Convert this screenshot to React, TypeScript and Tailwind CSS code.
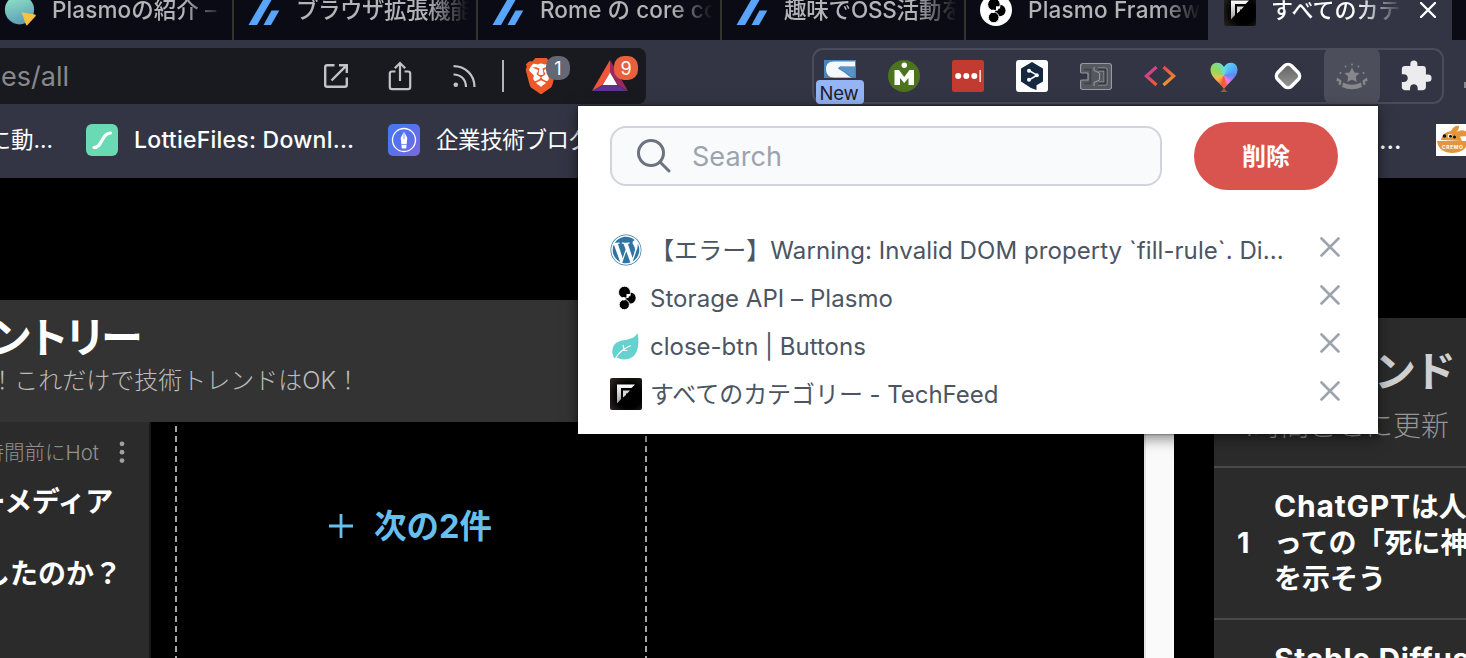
import type { ReactNode } from "react";
import { SiBrave } from "react-icons/si";
import { FaWordpress } from "react-icons/fa";
import { MdExtension } from "react-icons/md";

const ZennIcon = () => (
  <svg viewBox="0 0 32 32" className="size-8 shrink-0" fill="#59a5fb">
    <path d="M0.5 31H9L27 0H18.5Z" />
    <path d="M15.5 31H23L31.3 16.5H23.5Z" />
  </svg>
);

const TechFeedIcon = () => (
  <svg viewBox="0 0 32 32" className="size-8 shrink-0">
    <defs>
      <radialGradient id="tf" cx="0.6" cy="0.55" r="0.75">
        <stop offset="0.5" stopColor="#000" />
        <stop offset="1" stopColor="#2b2624" />
      </radialGradient>
      <linearGradient id="tfl" x1="0" y1="0" x2="0" y2="1">
        <stop offset="0" stopColor="#fff" />
        <stop offset="1" stopColor="#9a9a9a" />
      </linearGradient>
    </defs>
    <rect width="32" height="32" rx="2" fill="url(#tf)" />
    <path d="M7 6.500H25L21.500 10H11V21L7 25.500Z" fill="url(#tfl)" />
    <path d="M13 12.500H20L17.200 15.500H16V17L13 19.500Z" fill="#d8d8d8" />
  </svg>
);

const PlasmoMark = ({ className }: { className: string }) => (
  <svg viewBox="0 0 18 24" className={className}>
    <circle cx="12.200" cy="12" r="5.500" fill="#000" />
    <circle cx="6.500" cy="6.200" r="6" fill="#000" stroke="#fff" strokeWidth="0.900" />
    <circle cx="6.300" cy="18.600" r="5.100" fill="#000" stroke="#fff" strokeWidth="0.900" />
    <path d="M8.500 8H12.500V10.200H10.500V12H8.500Z" fill="#fff" />
    <circle cx="5.800" cy="12.800" r="1.700" fill="#fff" />
  </svg>
);

const PlanetIcon = () => (
  <svg viewBox="0 0 32 32" className="size-8 shrink-0">
    <defs>
      <linearGradient id="pl" x1="0.3" y1="0" x2="0.6" y2="1">
        <stop offset="0" stopColor="#8fe3c4" />
        <stop offset="1" stopColor="#5b9cb8" />
      </linearGradient>
    </defs>
    <circle cx="15.5" cy="15.8" r="14.6" fill="url(#pl)" />
    <path d="M18.2 18.2L31 20.5Q32.300 21 31.500 22.200L23.500 31Q22.500 32 21.900 30.500L17.800 19Q17.600 18.200 18.200 18.200Z" fill="#f6c244" />
  </svg>
);

const tabs = [
  { icon: <PlanetIcon />, title: "Plasmoの紹介 –", spacing: "tracking-[0.1px]" },
  { icon: <ZennIcon />, title: "ブラウザ拡張機能", spacing: "tracking-[-0.5px]" },
  { icon: <ZennIcon />, title: "Rome の core co", spacing: "tracking-[0.1px]" },
  { icon: <ZennIcon />, title: "趣味でOSS活動を", spacing: "tracking-[-0.2px]" },
  {
    icon: (
      <span className="flex size-8 shrink-0 items-center justify-center rounded-full bg-white">
        <PlasmoMark className="h-[25px] w-[19px]" />
      </span>
    ),
    title: "Plasmo Framework",
    spacing: "tracking-[0.2px]",
  },
];

const TabStrip = () => (
  <div className="flex h-10 shrink-0 overflow-hidden bg-[#0b0b15]">
    {tabs.map((t, i) => (
      <div
        key={i}
        className={`flex h-10 shrink-0 overflow-hidden ${i === 0 ? "w-[234px] pl-1" : i === 4 ? "w-[242px] pl-[14px]" : "w-[244px] pl-[14px]"} ${i < 4 ? "border-r-2 border-[#33342f]" : ""}`}
      >
        <div className="-mt-5 flex h-[60px] items-center">
          {t.icon}
          <span className={`ml-4 w-[173px] overflow-hidden whitespace-nowrap text-[22.5px] font-[450] leading-[36px] text-[#b4b4b7] [mask-image:linear-gradient(to_right,black_76%,transparent)] ${t.spacing}`}>
            {t.title}
          </span>
        </div>
      </div>
    ))}
    <div className="flex h-10 w-[244px] shrink-0 overflow-hidden bg-[#333544] pl-4">
      <div className="-mt-5 flex h-[60px] items-center">
        <TechFeedIcon />
        <span className="ml-[15px] w-[132px] overflow-hidden whitespace-nowrap text-[22px] font-medium leading-[36px] text-white [mask-image:linear-gradient(to_right,black_65%,transparent)]">
          すべてのカテゴ
        </span>
        <svg viewBox="0 0 16 16" className="ml-[17px] size-4" stroke="#fff" strokeWidth="2.4" strokeLinecap="round">
          <path d="M1 1L15 15M15 1L1 15" />
        </svg>
      </div>
    </div>
  </div>
);

const DeepLIcon = () => (
  <svg viewBox="0 0 32 32" className="size-8">
    <rect width="32" height="32" rx="3" fill="#fff" />
    <path d="M16 2L27 8.500V21.500L20.500 25.300V30L15 28L5 21.500V8.500Z" fill="#152840" />
    <path d="M13 10.500L21 15.200L13 20" stroke="#fff" strokeWidth="1.500" fill="none" />
    <g fill="#fff">
      <circle cx="13" cy="10.700" r="2" />
      <circle cx="20.800" cy="15.200" r="2" />
      <circle cx="13" cy="19.800" r="2" />
    </g>
  </svg>
);

const extensions: ReactNode[] = [
  <div className="relative flex h-full w-full items-center justify-center">
    <svg viewBox="0 0 32 32" className="size-8">
      <rect width="32" height="18" fill="#4a84b9" />
      <path d="M31 1.500H10C4 1.500 2 5 2 9C2 14 5 17.500 10 17.500H29C26 17.500 24 15.500 21 13L14 8.500L16 6.500H31Z" fill="#f4f8fb" />
      <path d="M14 8.200L16 6.500L30.500 7V16.500H28L22 12.500Z" fill="#5b93c4" />
    </svg>
    <span className="absolute bottom-0 left-1 flex h-6 w-12 items-center justify-center rounded-[4px] bg-[#94b4f6] pr-0.5 pt-0.5 text-[18.5px] leading-none tracking-[-0.2px] text-[#1f2023]">
      New
    </span>
  </div>,
  <svg viewBox="0 0 32 32" className="size-8">
    <circle cx="16" cy="16" r="16" fill="#4c7320" />
    <circle cx="16.300" cy="5.200" r="2.700" fill="#fff" />
    <path d="M6.500 25V10H11L16.200 17L21.500 10H26V25H20.500V18L16.200 23L12 18V25Z" fill="#fff" />
  </svg>,
  <svg viewBox="0 0 32 32" className="size-8">
    <rect width="32" height="32" rx="2.500" fill="#c13b31" />
    <g fill="#fff">
      <circle cx="6.200" cy="16" r="3" />
      <circle cx="14.300" cy="16" r="3" />
      <circle cx="22.300" cy="16" r="3" />
      <rect x="27.500" y="10" width="1.300" height="12" />
    </g>
  </svg>,
  <DeepLIcon />,
  <svg viewBox="0 0 32 32" className="size-8" strokeLinejoin="round">
    <path d="M3 3.500H29Q31.500 3.500 31.500 6V27Q31.500 29.500 29 29.500H3Q0.500 29.500 0.500 27V21.500Q0.500 20 2 20H8V13H2Q0.500 13 0.500 11.500V6Q0.500 3.500 3 3.500Z" fill="#55585e" stroke="#979a9e" strokeWidth="1.200" />
    <path d="M14 7V10.500L19.500 13V20L14 22.500V26" fill="none" stroke="#9a9da1" strokeWidth="1" />
    <path d="M18 9.500H25.500V23.500H18" fill="none" stroke="#9a9da1" strokeWidth="4" />
    <path d="M18 9.500H25.500V23.500H18" fill="none" stroke="#383a47" strokeWidth="2.400" />
    <path d="M4 9.500H10.500V23.500H4" fill="none" stroke="#3f414b" strokeWidth="1.600" />
  </svg>,
  <svg viewBox="0 0 32 32" className="size-8" fill="none" strokeWidth="3.200">
    <defs>
      <linearGradient id="c1" x1="0" y1="0" x2="0.600" y2="1">
        <stop offset="0.300" stopColor="#c9418f" />
        <stop offset="1" stopColor="#f0583a" />
      </linearGradient>
      <linearGradient id="c2" x1="0.300" y1="0" x2="0.500" y2="1">
        <stop offset="0" stopColor="#ea4a4a" />
        <stop offset="1" stopColor="#e9a02c" />
      </linearGradient>
    </defs>
    <path d="M12.500 7L2.300 16L12.500 25" stroke="url(#c1)" />
    <path d="M19.500 7L29.700 16L19.500 25" stroke="url(#c2)" />
  </svg>,
  <div className="relative h-8 w-8">
    <div className="absolute inset-0 bg-[conic-gradient(from_0deg_at_50%_48%,#62e0ea,#58b8f8_12%,#5a8cf5_24%,#b07af0_34%,#f77fe0_42%,#f0603e_48%,#ef5a3e_53%,#f5a04a_62%,#efc04e_70%,#9fd45a_80%,#86d978_90%,#62e0ea)] [clip-path:path('M16_29C11_22_2.500_17_2.500_10C2.500_1_13_1_16_7C19_1_29.500_1_29.500_10C29.500_17_21_22_16_29Z')]" />
    <svg viewBox="0 0 32 32" className="absolute inset-0 size-8">
      <path d="M16 28.500L19.500 32H12.500Z" fill="#b4503f" />
    </svg>
  </div>,
  <svg viewBox="0 0 32 32" className="size-8">
    <defs>
      <linearGradient id="dm" x1="0" y1="0" x2="1" y2="1">
        <stop offset="0" stopColor="#5e5e5e" />
        <stop offset="1" stopColor="#9a9a9a" />
      </linearGradient>
    </defs>
    <rect x="6.300" y="6.300" width="19.400" height="19.400" rx="5" transform="rotate(45 16 16)" fill="url(#dm)" stroke="#fff" strokeWidth="3.400" />
  </svg>,
  <svg viewBox="0 0 32 32" className="size-8" fill="#87888b">
    <path d="M16 7.500L18.400 12.400L23.500 13.100L19.800 16.700L20.700 22L16 19.500L11.300 22L12.200 16.700L8.500 13.100L13.600 12.400Z" />
    <path d="M7 22.500Q16 27 25 22.500L26 27Q16 31.500 6 27Z" />
    <path d="M1 17.500L5.500 20.500L4.800 25L2.500 24.500L3 21.500L0.500 21Z" />
    <path d="M31 17.500L26.500 20.500L27.200 25L29.500 24.500L29 21.500L31.500 21Z" />
    <circle cx="16" cy="4.500" r="1" />
    <circle cx="9.500" cy="6.500" r="0.900" />
    <circle cx="22.500" cy="6.500" r="0.900" />
    <circle cx="4.500" cy="13" r="1" />
    <circle cx="27.500" cy="13" r="1" />
  </svg>,
  <MdExtension className="size-[34px] text-[#ececee]" />,
];

const Toolbar = () => (
  <div className="flex h-[66px] shrink-0 items-start bg-[#333544] pt-2">
    <div className="flex h-14 w-[646px] shrink-0 items-center rounded-r-[8px] bg-[#191a1f]">
      <span className="w-[323px] whitespace-nowrap pl-px pt-0.5 text-[27px] text-[#88898d]">es/all</span>
      <svg viewBox="0 0 26 26" className="size-[26px]" fill="none" stroke="#c3c3c5" strokeWidth="2.400">
        <path d="M11.500 2.200H4.200Q2.200 2.200 2.200 4.200V21.800Q2.200 23.800 4.200 23.800H21.800Q23.800 23.800 23.800 21.800V14.500" />
        <path d="M16 2.200H23.800V10M23.800 2.200L8.500 17.500" />
      </svg>
      <svg viewBox="0 0 24 30" className="ml-[39px] h-[30px] w-6" fill="none" stroke="#c3c3c5" strokeWidth="2.200">
        <path d="M7.500 10.500H4Q1.800 10.500 1.800 12.700V26Q1.800 28.200 4 28.200H20Q22.200 28.200 22.200 26V12.700Q22.200 10.500 20 10.500H16.500" />
        <path d="M12 20V2.500M6.800 7.200L12 2L17.200 7.200" />
      </svg>
      <svg viewBox="0 0 24 24" className="ml-10 size-6" fill="none" stroke="#c3c3c5" strokeWidth="2.200">
        <path d="M1.500 2.200C13 2.200 22.500 10.500 22.500 23M1.500 10.500C8.500 10.500 14 15 14 23" />
        <circle cx="3.800" cy="20.800" r="2.300" fill="#c3c3c5" stroke="none" />
      </svg>
      <div className="ml-[26px] h-8 w-0.5 bg-[#b3b3b6]" />
      <div className="relative ml-[19px] size-9">
        <div className="absolute left-[6px] top-[5px] h-[25px] w-6 rounded-b-[12px] bg-white" />
        <SiBrave className="absolute inset-0 size-9 text-[#ec5a2a]" />
        <span className="absolute -top-0.5 left-[23px] flex size-6 items-center justify-center rounded-[10px] bg-[#646775] text-[18px] text-white">1</span>
      </div>
      <div className="relative ml-[33px] size-9">
        <svg viewBox="0 0 36 36" className="size-9">
          <path d="M18 2V14.500L10.500 27L0 33Z" fill="#f0543a" />
          <path d="M18 2V14.500L25.500 27L36 33Z" fill="#9a2a5e" />
          <path d="M0 33L10.500 27H25.500L36 33Z" fill="#5f328e" />
          <path d="M18 14.500L25.300 27H10.700Z" fill="#fff" />
        </svg>
        <span className="absolute -top-0.5 left-[22px] flex size-6 items-center justify-center rounded-[10px] bg-[#e8603c] text-[18px] text-white">9</span>
      </div>
    </div>
    <div className="ml-[166px] flex h-14 w-[632px] shrink-0 gap-2 rounded-[11px] shadow-[inset_0_0_0_2px_#4b4c5a]">
      {extensions.map((e, i) => (
        <div key={i} className={`flex h-14 w-14 shrink-0 items-center justify-center rounded-[8px] ${i === 8 ? "bg-[#4d4e5b]" : ""}`}>
          {e}
        </div>
      ))}
    </div>
    <div className="ml-5 mt-[34px] h-1.5 w-0.5 shrink-0 bg-[#88898f]" />
  </div>
);

const Bookmarks = () => (
  <div className="flex h-[72px] shrink-0 items-center overflow-hidden bg-[#333544] pb-1 text-[22.5px] text-white">
    <span className="flex w-[53px] shrink-0 justify-end whitespace-nowrap">に動...</span>
    <svg viewBox="0 0 32 32" className="ml-[33px] size-8 shrink-0">
      <rect width="32" height="32" rx="6" fill="#69dab4" />
      <path d="M8 23.500C16.500 23.500 15.500 9 24.500 9" stroke="#fff" strokeWidth="3.200" strokeLinecap="round" fill="none" />
    </svg>
    <span className="ml-4 w-[254px] shrink-0 whitespace-nowrap text-[23px] font-[450] tracking-[0.25px]">LottieFiles: Downl...</span>
    <svg viewBox="0 0 32 32" className="size-8 shrink-0">
      <defs>
        <linearGradient id="bk" x1="0" y1="0" x2="1" y2="1">
          <stop offset="0.300" stopColor="#4d74f2" />
          <stop offset="1" stopColor="#7a68dc" />
        </linearGradient>
      </defs>
      <rect width="32" height="32" rx="5" fill="url(#bk)" />
      <circle cx="16" cy="16" r="11.500" fill="none" stroke="#fff" strokeWidth="1.300" />
      <path d="M16 7.500L19.300 14L18.200 24.500H13.800L12.700 14Z" fill="#fff" />
      <path d="M16 7V15M13 20.500H19" stroke="#6a86f4" strokeWidth="0.800" />
    </svg>
    <span className="ml-4 w-[942px] shrink-0 whitespace-nowrap tracking-[-0.4px]">企業技術ブログ</span>
    <span className="w-[27px] shrink-0 whitespace-nowrap pl-px text-[26px] leading-none">...</span>
    <svg viewBox="0 0 32 32" className="ml-[31px] size-8 shrink-0">
      <rect width="32" height="32" fill="#fff" />
      <path d="M1 17H32C31 25 25 29 16.500 29C8 29 2 25 1 17Z" fill="#e4943a" />
      <path d="M5 16C6 10 10 8 15 7C17 3 20 1 23 2C23 5 22 7 20 8.500C25 5 29 6 32 9V12L24 12.500L26 17Z" fill="#e4943a" />
      <circle cx="8.500" cy="12" r="1.700" fill="#111" />
      <circle cx="14" cy="12" r="2.300" fill="#fff" />
      <circle cx="14.500" cy="12.200" r="1.500" fill="#111" />
      <circle cx="18.500" cy="13" r="1.500" fill="#111" />
      <text x="6" y="24.500" fontSize="5" fontWeight="700" fill="#fff" letterSpacing="0.600">CREMO</text>
    </svg>
  </div>
);

const LeafIcon = () => (
  <svg viewBox="0 0 32 32" className="size-8">
    <path d="M27.500 3C29.500 12 29.500 29.500 14 29.500C11.500 29.500 9.500 28.800 8 27.800L4.500 28.500C1.500 24 1.500 17.500 5 14C11 8 23 12 27.500 3Z" fill="#66d1cf" />
    <path d="M5 29C8 23.500 12 19 21 15.500M13 15L14 19M12.500 20.500L17.500 20.500" stroke="#fff" strokeWidth="1.200" fill="none" />
  </svg>
);

const items = [
  {
    icon: <FaWordpress className="size-8 text-[#2f75a3]" />,
    title: "【エラー】Warning: Invalid DOM property `fill-rule`. Di...",
    spacing: "tracking-[0.07px]",
  },
  {
    icon: (
      <span className="flex size-8 items-center justify-center pl-0.5">
        <PlasmoMark className="h-6 w-[18px]" />
      </span>
    ),
    title: "Storage API – Plasmo",
    spacing: "tracking-[0.05px]",
  },
  { icon: <LeafIcon />, title: "close-btn | Buttons", spacing: "tracking-normal" },
  { icon: <TechFeedIcon />, title: "すべてのカテゴリー - TechFeed", spacing: "tracking-[-0.05px]" },
];

const Popup = () => (
  <div className="absolute left-[578px] top-[106px] flex h-[328px] w-[800px] flex-col bg-white px-8 pt-4 shadow-[0_4px_14px_rgba(0,0,0,0.5),0_0_2px_rgba(0,0,0,0.6)]">
    <div className="flex h-[68px] items-center justify-between">
      <div className="flex h-[60px] w-[552px] items-center rounded-2xl border-2 border-[#d1d5db] bg-[#f9fafb] pl-6">
        <svg viewBox="0 0 36 36" className="size-9" fill="none" stroke="#6b7280" strokeWidth="3" strokeLinecap="round">
          <circle cx="15" cy="15" r="12.500" />
          <path d="M24 24L33 33" />
        </svg>
        <span className="ml-5 pt-0.5 text-[27px] tracking-[0.05px] text-[#9ca3af]">Search</span>
      </div>
      <button className="mr-2 h-[68px] w-36 rounded-full bg-[#d9534f] pt-0.5 text-2xl font-bold text-white">削除</button>
    </div>
    <ul className="mt-9">
      {items.map((it) => (
        <li key={it.title} className="flex h-12 items-center">
          {it.icon}
          <span className={`ml-2 w-[662px] whitespace-nowrap pt-0.5 text-2xl font-[430] text-[#4b5563] ${it.spacing}`}>{it.title}</span>
          <svg viewBox="0 0 20 20" className="ml-2 size-5 -translate-y-[3px]" stroke="#9ca3af" strokeWidth="2.600" strokeLinecap="round">
            <path d="M1.500 1.500L18.500 18.500M18.500 1.500L1.500 18.500" />
          </svg>
        </li>
      ))}
    </ul>
  </div>
);

const DashedLine = () => (
  <div className="mt-1 w-0.5 shrink-0 bg-[repeating-linear-gradient(to_bottom,#a5a5a5_0_6px,transparent_6px_10px)]" />
);

const Feed = () => (
  <div className="flex w-[1144px] shrink-0 flex-col pt-[122px]">
    <div className="flex h-[122px] shrink-0 flex-col bg-[#333]">
      <div className="mt-4 flex h-11 w-[138px] items-center justify-end whitespace-nowrap text-[42px] font-bold leading-none tracking-[-5px] text-white">ントリー</div>
      <div className="mt-[5px] flex h-8 w-[360px] items-center justify-end whitespace-nowrap text-2xl font-light text-[#bcbcbc]">！これだけで技術トレンドはOK！</div>
    </div>
    <div className="flex grow">
      <div className="w-[151px] shrink-0 overflow-hidden border-r-2 border-[#191919] bg-[#2b2b2b]">
        <div className="mt-4 flex h-7 items-center">
          <span className="flex w-[99px] shrink-0 justify-end whitespace-nowrap pt-0.5 text-[20.5px] font-light text-[#929292]">時間前にHot</span>
          <svg viewBox="0 0 6 22" className="ml-5 h-[22px] w-1.5" fill="#a0a0a0">
            <circle cx="3" cy="2.800" r="2.400" />
            <circle cx="3" cy="11.200" r="2.400" />
            <circle cx="3" cy="19.600" r="2.400" />
          </svg>
        </div>
        <div className="mt-4 flex h-10 w-[113px] items-center justify-end whitespace-nowrap text-[28px] font-bold tracking-[-0.3px] text-white">ーメディア</div>
        <div className="mt-8 flex h-10 w-[122px] items-center justify-end whitespace-nowrap text-[28px] font-bold text-white">したのか？</div>
      </div>
      <div className="flex pl-6">
        <DashedLine />
        <div className="flex w-[467px] justify-center pt-[83px]">
          <div className="flex h-11 items-center gap-[21px] text-[32.5px] font-bold text-[#66bfec]">
            <svg viewBox="0 0 24 24" className="size-6 -translate-y-px" stroke="#66bfec" strokeWidth="2.800">
              <path d="M12 0V24M0 12H24" />
            </svg>
            <span className="whitespace-nowrap">次の2件</span>
          </div>
        </div>
        <div className="ml-px flex">
          <DashedLine />
        </div>
      </div>
    </div>
  </div>
);

const TrendPanel = () => (
  <div className="ml-10 mt-[140px] flex w-[252px] shrink-0 flex-col overflow-hidden bg-[#2b2b2b]">
    <div className="flex h-[150px] shrink-0 flex-col border-b-2 border-[#4a4a4a]">
      <div className="mt-[30px] flex h-12 w-[240px] items-center justify-end whitespace-nowrap text-[42px] font-bold leading-none tracking-[-2px] text-[#d0d0d2]">ンド</div>
      <div className="mt-3 flex h-9 w-[235px] items-center justify-end whitespace-nowrap text-[28px] font-light text-[#969696]">1時間ごとに更新</div>
    </div>
    <div className="flex h-[152px] shrink-0 items-center border-b-2 border-[#4a4a4a] text-[28px] font-bold leading-9 text-white">
      <span className="w-[60px] shrink-0 pl-[23px] text-[29px]">1</span>
      <span className="whitespace-nowrap">
        <span className="text-[30px] leading-none tracking-[0.8px]">ChatGPT</span>
        <span>は人</span>
        <br />
        っての「死に神
        <br />
        を示そう
      </span>
    </div>
    <div className="pl-[60px] pt-[21px] text-[30px] font-bold leading-9 text-white">
      <span className="whitespace-nowrap tracking-[0.6px]">Stable Diffusion</span>
    </div>
  </div>
);

export default function App() {
  return (
    <div lang="ja" className="relative flex h-[658px] w-[1466px] flex-col overflow-hidden bg-black font-['Inter','Noto_Sans_CJK_JP',sans-serif]">
      <TabStrip />
      <Toolbar />
      <Bookmarks />
      <div className="flex h-[480px] shrink-0 overflow-hidden">
        <Feed />
        <div className="w-[30px] shrink-0 border-l-2 border-[#e5e5e5] bg-[#fafafa]" />
        <TrendPanel />
      </div>
      <Popup />
    </div>
  );
}
